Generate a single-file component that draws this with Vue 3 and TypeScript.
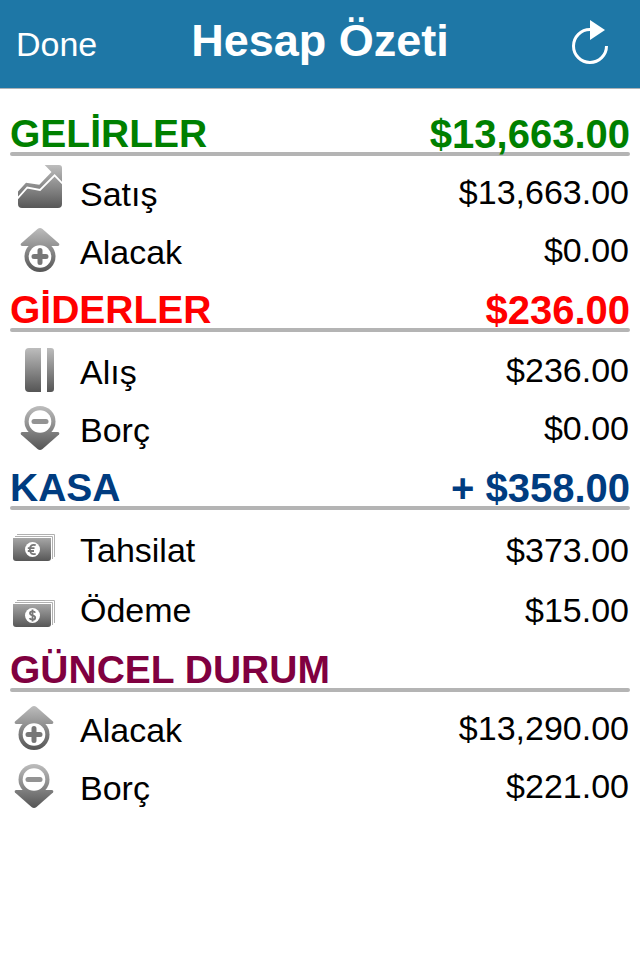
<script setup lang="ts">
type IconName = 'trend' | 'up' | 'book' | 'down' | 'euro' | 'dollar'

interface Entry {
  icon: IconName
  label: string
  amount: string
}

interface Section {
  id: string
  title: string
  total?: string
  entries: Entry[]
}

const sections: Section[] = [
  {
    id: 'income',
    title: 'GELİRLER',
    total: '$13,663.00',
    entries: [
      { icon: 'trend', label: 'Satış', amount: '$13,663.00' },
      { icon: 'up', label: 'Alacak', amount: '$0.00' },
    ],
  },
  {
    id: 'expense',
    title: 'GİDERLER',
    total: '$236.00',
    entries: [
      { icon: 'book', label: 'Alış', amount: '$236.00' },
      { icon: 'down', label: 'Borç', amount: '$0.00' },
    ],
  },
  {
    id: 'cash',
    title: 'KASA',
    total: '+ $358.00',
    entries: [
      { icon: 'euro', label: 'Tahsilat', amount: '$373.00' },
      { icon: 'dollar', label: 'Ödeme', amount: '$15.00' },
    ],
  },
  {
    id: 'status',
    title: 'GÜNCEL DURUM',
    entries: [
      { icon: 'up', label: 'Alacak', amount: '$13,290.00' },
      { icon: 'down', label: 'Borç', amount: '$221.00' },
    ],
  },
]
</script>

<template>
  <div class="screen">
    <header class="bar">
      <button class="done" type="button">Done</button>
      <h1 class="title">Hesap Özeti</h1>
      <button class="refresh" type="button" aria-label="Yenile">
        <svg width="40" height="50" viewBox="0 0 40 50" aria-hidden="true">
          <path d="M20 10.5A16.5 16.5 0 1 0 36.5 27" fill="none" stroke="#fff" stroke-width="3" />
          <path d="M20 1V21L35 11Z" fill="#fff" />
        </svg>
      </button>
    </header>

    <svg class="defs" width="0" height="0" aria-hidden="true">
      <defs>
        <linearGradient id="metal" gradientUnits="userSpaceOnUse" x1="0" y1="0" x2="0" y2="44">
          <stop offset="0" stop-color="#bdbdbd" />
          <stop offset="1" stop-color="#555" />
        </linearGradient>
        <linearGradient id="note" gradientUnits="userSpaceOnUse" x1="0" y1="0" x2="0" y2="27">
          <stop offset="0" stop-color="#b4b4b4" />
          <stop offset="1" stop-color="#575757" />
        </linearGradient>
      </defs>
    </svg>

    <main class="content">
      <section v-for="s in sections" :key="s.id" class="section" :class="s.id">
        <h2 class="heading">
          <span>{{ s.title }}</span>
          <span v-if="s.total" class="total">{{ s.total }}</span>
        </h2>
        <ul class="rows">
          <li v-for="e in s.entries" :key="e.label" class="row">
            <span class="icon">
              <svg v-if="e.icon === 'trend'" width="44" height="54" viewBox="0 0 44 54" aria-hidden="true">
                <path
                  d="M0 26.5L8 17.7L21.3 19.7L33.5 7L26.7 0H41Q44 0 44 3V39Q44 43 40 43H4Q0 43 0 39Z"
                  fill="url(#metal)"
                />
                <path d="M-1 34L9.3 22.5L22 25L36.6 10.3L45 19" fill="none" stroke="#fff" stroke-width="1.8" />
              </svg>
              <svg v-else-if="e.icon === 'up'" width="40" height="44" viewBox="0 0 40 44" aria-hidden="true">
                <g fill="url(#metal)">
                  <path d="M17.5 1Q20 -1 22.5 1L39 15.5Q40 17.5 38 18H2Q0 17.5 1 15.5Z" />
                  <circle cx="20" cy="28.5" r="15.5" />
                </g>
                <circle cx="20" cy="28.5" r="11.3" fill="#fff" />
                <path d="M20 22.5V34.5M14 28.5H26" stroke="#777" stroke-width="5" stroke-linecap="round" />
              </svg>
              <svg v-else-if="e.icon === 'book'" width="30" height="44" viewBox="0 0 30 44" aria-hidden="true">
                <path
                  d="M4 0H16V44H4Q0 44 0 40V4Q0 0 4 0ZM22 0H26Q29 0 29 3V41Q29 44 26 44H22Z"
                  fill="url(#metal)"
                />
              </svg>
              <svg v-else-if="e.icon === 'down'" width="40" height="44" viewBox="0 0 40 44" aria-hidden="true">
                <g fill="url(#metal)">
                  <path d="M17.5 43Q20 45 22.5 43L39 28.5Q40 26.5 38 26H2Q0 26.5 1 28.5Z" />
                  <circle cx="20" cy="15.5" r="15.5" />
                </g>
                <circle cx="20" cy="15.5" r="11.3" fill="#fff" />
                <path d="M14 15.5H26" stroke="#939393" stroke-width="5" stroke-linecap="round" />
              </svg>
              <svg
                v-else
                width="42"
                height="33"
                :viewBox="e.icon === 'euro' ? '0 0 42 33' : '0 -6 42 33'"
                aria-hidden="true"
              >
                <path d="M4 .5H41.5V23M2 2.5H39.5V25" fill="none" stroke="#b0b0b0" />
                <path d="M0 4H38V24Q38 27 35 27H3Q0 27 0 24Z" fill="url(#note)" />
                <circle cx="19.5" cy="15.5" r="7.5" fill="#fff" />
                <path
                  v-if="e.icon === 'euro'"
                  d="M22.7 11.2Q17 9.5 16.9 15.5Q17 21.5 22.7 19.8M14.8 14.2H21.5M14.8 17H21"
                  fill="none"
                  stroke="#777"
                  stroke-width="1.8"
                />
                <path
                  v-else
                  d="M22.3 12.6Q21.6 11.4 19.5 11.4Q17 11.4 17 13.3Q17 14.8 19.5 15.4Q22.2 16 22.2 17.7Q22.2 19.7 19.5 19.7Q17.2 19.7 16.6 18.2M19.5 9.5V21.5"
                  fill="none"
                  stroke="#777"
                  stroke-width="1.8"
                />
              </svg>
            </span>
            <span class="label">{{ e.label }}</span>
            <span class="amount">{{ e.amount }}</span>
          </li>
        </ul>
      </section>
    </main>
  </div>
</template>

<style>
body {
  margin: 0;
  background: #fff;
}
</style>

<style scoped>
.screen {
  isolation: isolate;
  min-height: 100vh;
  background: #fff;
  color: #000;
  font-family: "Liberation Sans", Arial, sans-serif;
}
.bar {
  display: grid;
  grid-template-columns: 1fr auto 1fr;
  align-items: center;
  height: 88px;
  padding: 0 16px;
  background: #1e77a6;
  border-bottom: 1px solid #aeb2b6;
  color: #fff;
}
button {
  padding: 0;
  border: 0;
  background: none;
  color: inherit;
  font-family: inherit;
  cursor: pointer;
}
.done {
  justify-self: start;
  font-size: 34px;
  line-height: 40px;
}
.title {
  margin: 0;
  padding-bottom: 6px;
  font-size: 45px;
  line-height: 52px;
}
.refresh {
  justify-self: end;
  display: flex;
  margin-right: 14px;
}
.defs {
  display: block;
}
.content {
  padding: 15px 10px;
}
.heading {
  position: relative;
  display: flex;
  justify-content: space-between;
  align-items: flex-end;
  height: 52px;
  margin: 0;
  padding-bottom: 4px;
  box-sizing: border-box;
  font-size: 39px;
  line-height: 36px;
}
.heading::after {
  content: "";
  position: absolute;
  inset: auto 0 0;
  height: 4px;
  border-radius: 2px;
  background: #b4b4b4;
  z-index: -1;
}
.total {
  font-size: 40px;
}
.rows {
  margin: 0;
  padding: 7px 0 1px;
  list-style: none;
}
.row {
  display: flex;
  align-items: center;
  height: 58px;
  font-size: 34px;
  line-height: 40px;
}
.icon {
  display: flex;
  justify-content: center;
  width: 60px;
  margin-right: 10px;
}
.label {
  flex: 1;
  padding-top: 4px;
}
.amount {
  padding-right: 1px;
}
.income .heading {
  color: #008000;
}
.expense .heading {
  color: #f00;
}
.cash .heading {
  color: #003c80;
}
.status .heading {
  color: #800040;
}
.expense .rows {
  padding: 9px 0 1px;
}
.cash .rows {
  padding: 10px 0 0;
}
.cash .row {
  height: 60px;
}
.cash .label {
  padding-top: 0;
}
.cash .icon,
.status .icon {
  width: 48px;
  margin-right: 22px;
}
</style>
